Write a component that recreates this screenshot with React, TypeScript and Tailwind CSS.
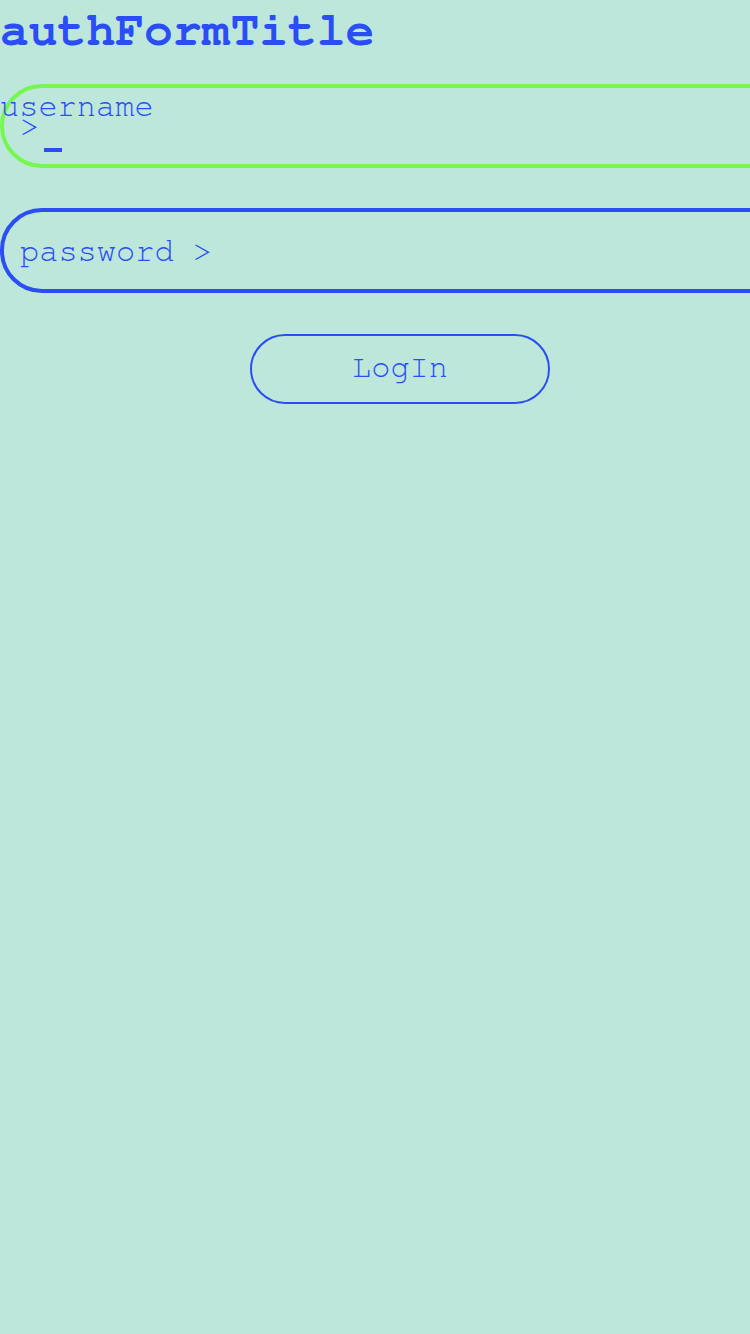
import React from "react";

export default function App() {
  return (
    <div
      className="min-h-[1334px] w-full overflow-hidden bg-[#bde7db] text-[#2a4df4]"
      style={{ fontFamily: 'FreeMono, "TeX Gyre Cursor", "Liberation Mono", monospace' }}
    >
      <div className="w-[800px] flex flex-col">
        <h1 className="text-[48px] font-bold leading-[54px] pt-[4px]">authFormTitle</h1>
        <div className="mt-[26px] relative h-[84px] rounded-[42px] border-4 border-[#76f750]">
          <span className="absolute left-[-4px] top-[2px] text-[32px] leading-[32px]">username</span>
          <span className="absolute left-[16px] top-[22px] text-[32px] leading-[32px]">&gt;</span>
          <span className="absolute left-[40px] top-[60px] w-[18px] h-[4px] bg-[#2a4df4]" />
        </div>
        <div className="mt-[40px] h-[85px] rounded-[42px] border-4 border-[#2a4df4] flex items-center pl-[16px]">
          <span className="text-[32px] leading-[32px]">password &gt;</span>
        </div>
        <div className="mt-[41px] flex justify-center">
          <button className="w-[300px] h-[70px] rounded-full border-2 border-[#2a4df4] text-[32px] leading-[32px] text-[#2a4df4] pb-[4px]">
            LogIn
          </button>
        </div>
      </div>
    </div>
  );
}
